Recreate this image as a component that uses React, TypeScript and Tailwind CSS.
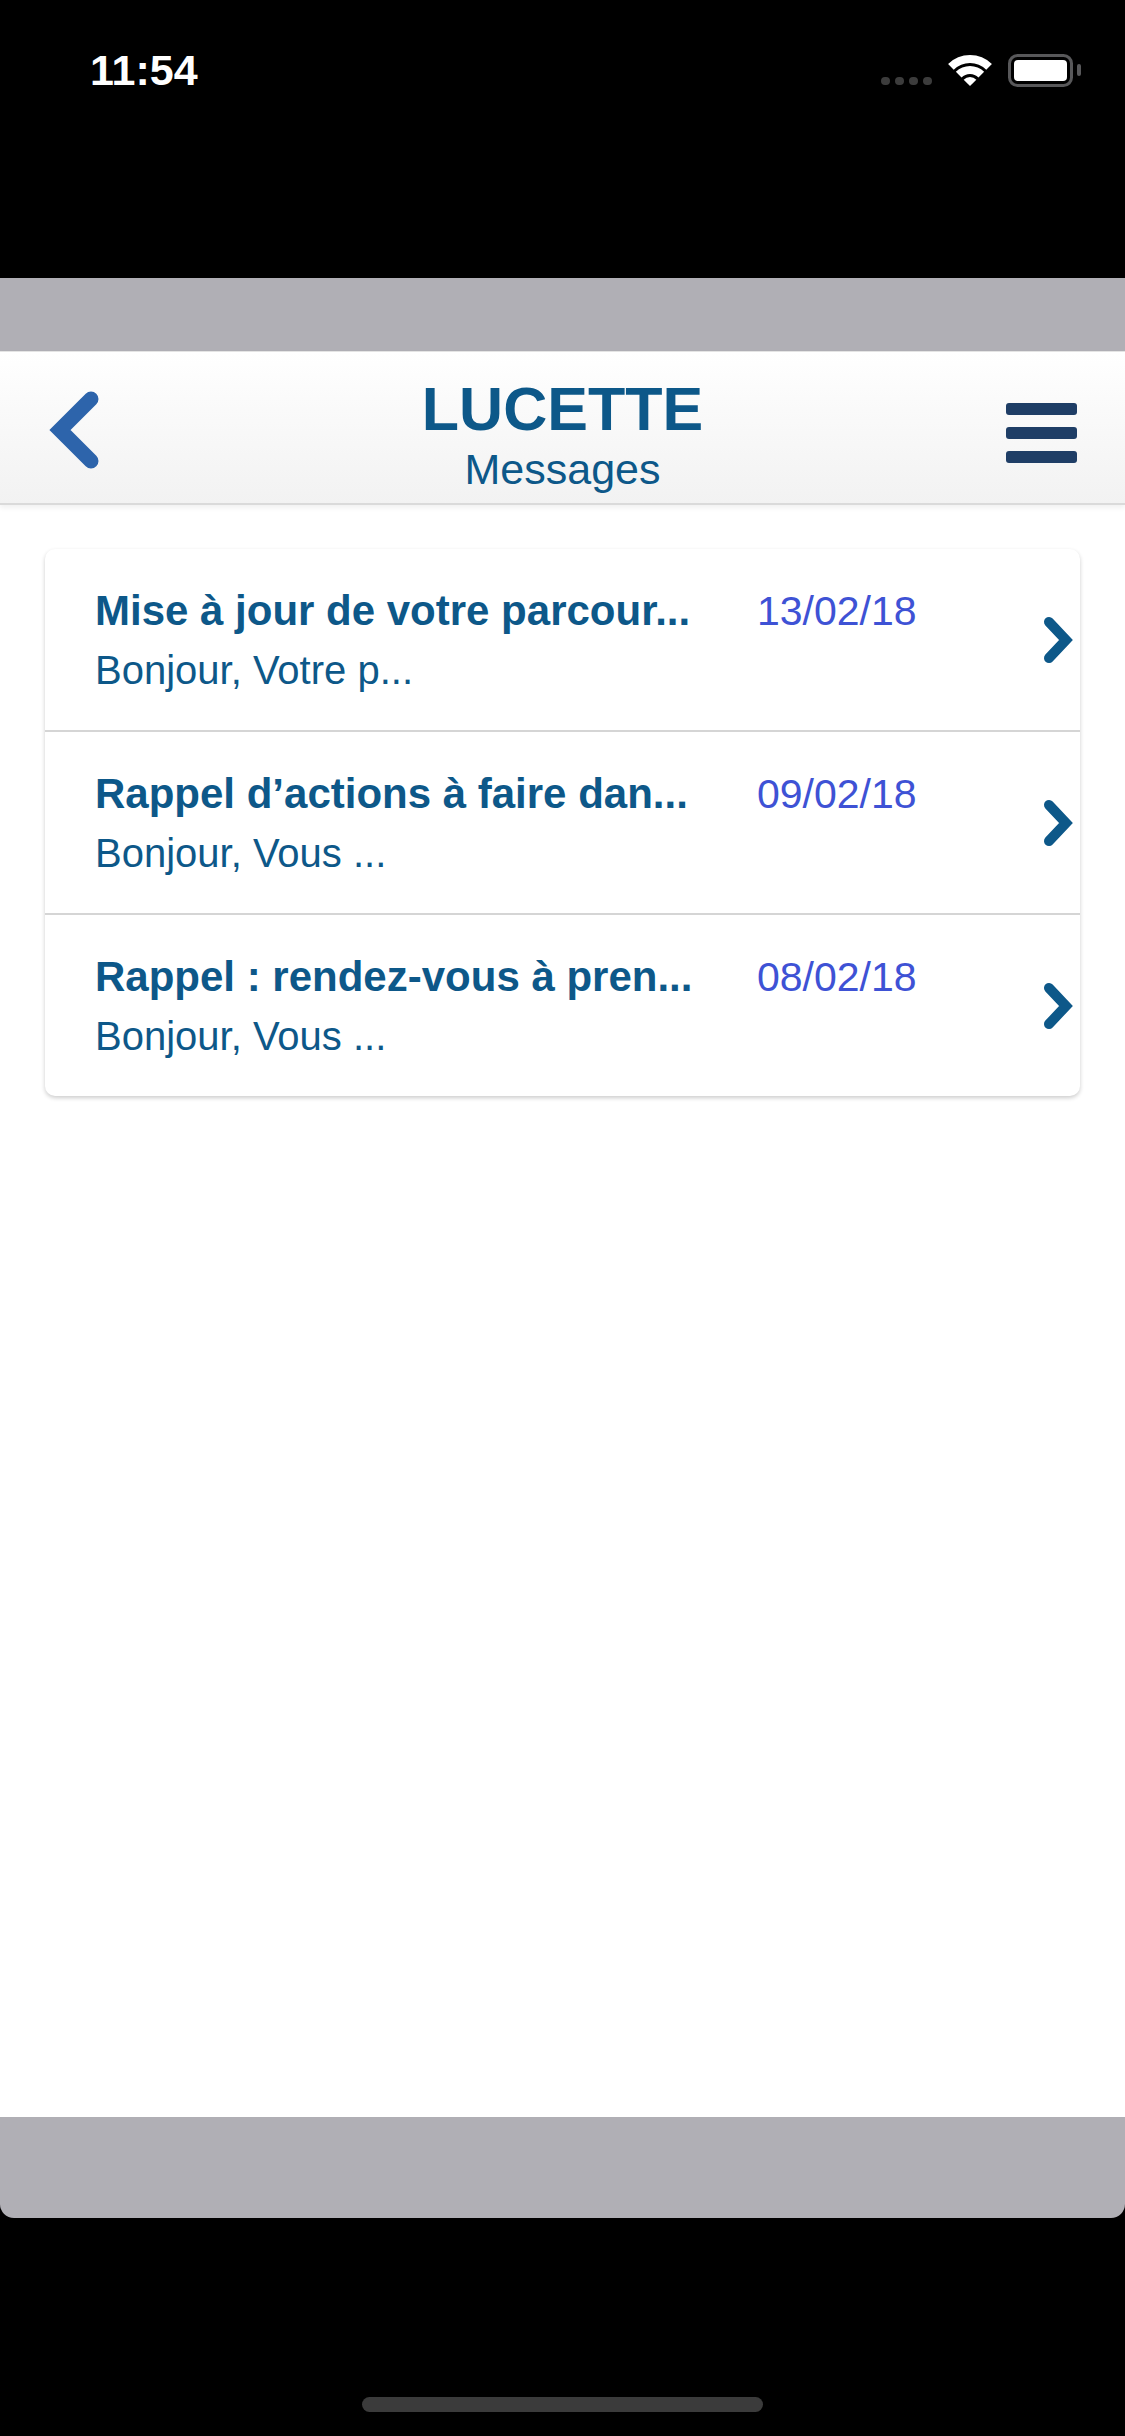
import React from "react";

const messages = [
  { title: "Mise à jour de votre parcour...", date: "13/02/18", preview: "Bonjour, Votre p..." },
  { title: "Rappel d’actions à faire dan...", date: "09/02/18", preview: "Bonjour, Vous ..." },
  { title: "Rappel : rendez-vous à pren...", date: "08/02/18", preview: "Bonjour, Vous ..." },
];

function Wifi() {
  return (
    <svg width="46" height="32" viewBox="0 0 46 32" fill="#fff">
      <path d="M1.08 9.08 A31 31 0 0 1 44.92 9.08 L39.26 14.74 A23 23 0 0 0 6.74 14.74 Z" />
      <path d="M8.86 16.86 A20 20 0 0 1 37.14 16.86 L31.49 22.51 A12 12 0 0 0 14.51 22.51 Z" />
      <path d="M16.64 24.64 A9 9 0 0 1 29.36 24.64 L23 31 Z" />
    </svg>
  );
}

function Battery() {
  return (
    <svg width="74" height="33" viewBox="0 0 74 33">
      <rect x="1.5" y="1.5" width="62" height="30" rx="8" fill="none" stroke="#58585a" strokeWidth="3" />
      <rect x="6" y="6" width="53" height="21" rx="4" fill="#fff" />
      <rect x="69" y="10" width="4" height="12" rx="2" fill="#58585a" />
    </svg>
  );
}

function BackChevron() {
  return (
    <svg width="60" height="92" viewBox="0 0 60 92" className="mt-[4px]">
      <polyline
        points="47,15 16,46 47,77"
        fill="none"
        stroke="#2d64ab"
        strokeWidth="15"
        strokeLinecap="round"
        strokeLinejoin="miter"
      />
    </svg>
  );
}

function RowChevron() {
  return (
    <svg width="36" height="52" viewBox="0 0 36 52">
      <polyline
        points="9,8 26,26 9,44"
        fill="none"
        stroke="#0d5889"
        strokeWidth="10"
        strokeLinecap="round"
        strokeLinejoin="miter"
      />
    </svg>
  );
}

export default function App() {
  return (
    <div
      className="w-[1125px] h-[2436px] bg-black flex flex-col overflow-hidden"
      style={{ fontFamily: '"Liberation Sans", Arial, sans-serif' }}
    >
      {/* Status bar */}
      <div className="h-[278px] shrink-0">
        <div className="h-[140px] flex items-center justify-between pl-[90px] pr-[43px]">
          <span className="text-[43px] leading-none font-semibold text-white">11:54</span>
          <div className="flex items-end gap-[15px]">
            <div className="flex gap-[5px] mb-[2px]">
              <div className="w-[9px] h-[8px] rounded-full bg-[#3c3c3c]" />
              <div className="w-[9px] h-[8px] rounded-full bg-[#3c3c3c]" />
              <div className="w-[9px] h-[8px] rounded-full bg-[#3c3c3c]" />
              <div className="w-[9px] h-[8px] rounded-full bg-[#3c3c3c]" />
            </div>
            <Wifi />
            <Battery />
          </div>
        </div>
      </div>

      {/* App window */}
      <div className="flex flex-col rounded-b-[14px] overflow-hidden">
        <div className="h-[73px] bg-[#b0afb5]" />

        {/* Header */}
        <div className="relative z-10 h-[154px] grid grid-cols-[1fr_auto_1fr] items-center bg-gradient-to-b from-white to-[#f2f2f2] border-t border-[#e4e4e4] border-b-2 border-b-[#dadada] shadow-[0_3px_5px_rgba(0,0,0,0.06)]">
          <div className="flex justify-start pl-[44px]">
            <BackChevron />
          </div>
          <div className="flex flex-col items-center gap-[8px] mt-[14px]">
            <span className="text-[61px] leading-none font-bold text-[#0d5889]">LUCETTE</span>
            <span className="text-[43px] leading-none text-[#0d5889]">Messages</span>
          </div>
          <div className="flex justify-end pr-[48px]">
            <div className="flex flex-col gap-[12px] mt-[10px]">
              <div className="w-[71px] h-[12px] rounded-[3px] bg-[#1f3e66]" />
              <div className="w-[71px] h-[12px] rounded-[3px] bg-[#1f3e66]" />
              <div className="w-[71px] h-[12px] rounded-[3px] bg-[#1f3e66]" />
            </div>
          </div>
        </div>

        {/* Content */}
        <div className="h-[1612px] bg-white px-[45px] pt-[44px]">
          <div className="bg-white rounded-[10px] shadow-[0_2px_4px_rgba(0,0,0,0.2)] overflow-hidden">
            {messages.map((m, i) => (
              <div
                key={i}
                className={
                  i < messages.length - 1
                    ? "h-[183px] flex items-center pl-[50px] pr-[4px] border-b-2 border-[#d5d5d5]"
                    : "h-[181px] flex items-center pl-[50px] pr-[4px]"
                }
              >
                <div className="flex-1 flex flex-col gap-[18px]">
                  <div className="flex items-baseline">
                    <span className="w-[662px] text-[42px] leading-none font-bold text-[#0d5889] whitespace-nowrap">
                      {m.title}
                    </span>
                    <span className="text-[41px] leading-none text-[#3e52d5]">{m.date}</span>
                  </div>
                  <span className="text-[40px] leading-none text-[#0d5889]">{m.preview}</span>
                </div>
                <RowChevron />
              </div>
            ))}
          </div>
        </div>

        <div className="h-[101px] bg-[#b0afb5]" />
      </div>

      {/* Home indicator */}
      <div className="flex justify-center pt-[179px]">
        <div className="w-[401px] h-[15px] rounded-full bg-[#3b3b3b]" />
      </div>
    </div>
  );
}
